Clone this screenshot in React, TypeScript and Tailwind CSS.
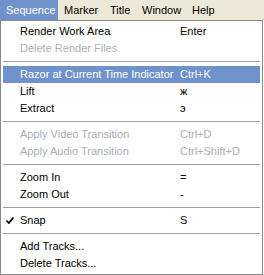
type Item =
  | { sep: true }
  | { sep?: false; label: string; key?: string; disabled?: boolean; active?: boolean; checked?: boolean };

const items: Item[] = [
  { label: "Render Work Area", key: "Enter" },
  { label: "Delete Render Files", disabled: true },
  { sep: true },
  { label: "Razor at Current Time Indicator", key: "Ctrl+K", active: true },
  { label: "Lift", key: "ж" },
  { label: "Extract", key: "э" },
  { sep: true },
  { label: "Apply Video Transition", key: "Ctrl+D", disabled: true },
  { label: "Apply Audio Transition", key: "Ctrl+Shift+D", disabled: true },
  { sep: true },
  { label: "Zoom In", key: "=" },
  { label: "Zoom Out", key: "-" },
  { sep: true },
  { label: "Snap", key: "S", checked: true },
  { sep: true },
  { label: "Add Tracks..." },
  { label: "Delete Tracks..." },
];

const menus = [
  { name: "Sequence", w: "w-[58px]", open: true },
  { name: "Marker", w: "w-[46px]" },
  { name: "Title", w: "w-[32px]" },
  { name: "Window", w: "w-[50px]" },
  { name: "Help", w: "w-[40px]" },
];

const cn = (...c: (string | false | undefined)[]) => c.filter(Boolean).join(" ");

export default function App() {
  return (
    <div className="w-[264px] h-[275px] bg-white text-[11px] leading-none text-black font-['Liberation_Sans','Noto_Sans',sans-serif] select-none">
      <div className="flex h-5 bg-[#ece9d8]">
        {menus.map((m) => (
          <div
            key={m.name}
            className={cn(
              "flex items-center pl-[6px]",
              m.w,
              m.open && "bg-[#6f92cb] text-white"
            )}
          >
            {m.name}
          </div>
        ))}
      </div>

      <div className="w-[263px] h-[255px] border border-[#8a8a8a] px-[2px] pt-[2px] bg-white">
        {items.map((it, i) =>
          it.sep ? (
            <div key={i} className="py-[4px]">
              <div className="h-px bg-[#a0a0a0]" />
            </div>
          ) : (
            <div
              key={i}
              className={cn(
                "relative flex items-center h-[17px]",
                it.active && "bg-[#6f92cb] text-white",
                it.disabled && "text-[#a9adb6]"
              )}
            >
              {it.checked && (
                <svg className="absolute left-[3px] top-[5px]" width="8" height="7" viewBox="0 0 8 7">
                  <path d="M0.5 3.5 L2.8 6 L7.5 0.5" fill="none" stroke="black" strokeWidth="1.8" />
                </svg>
              )}
              <span className="w-[177px] pl-[17px] whitespace-nowrap">{it.label}</span>
              <span className="whitespace-nowrap">{it.key}</span>
            </div>
          )
        )}
      </div>
    </div>
  );
}
